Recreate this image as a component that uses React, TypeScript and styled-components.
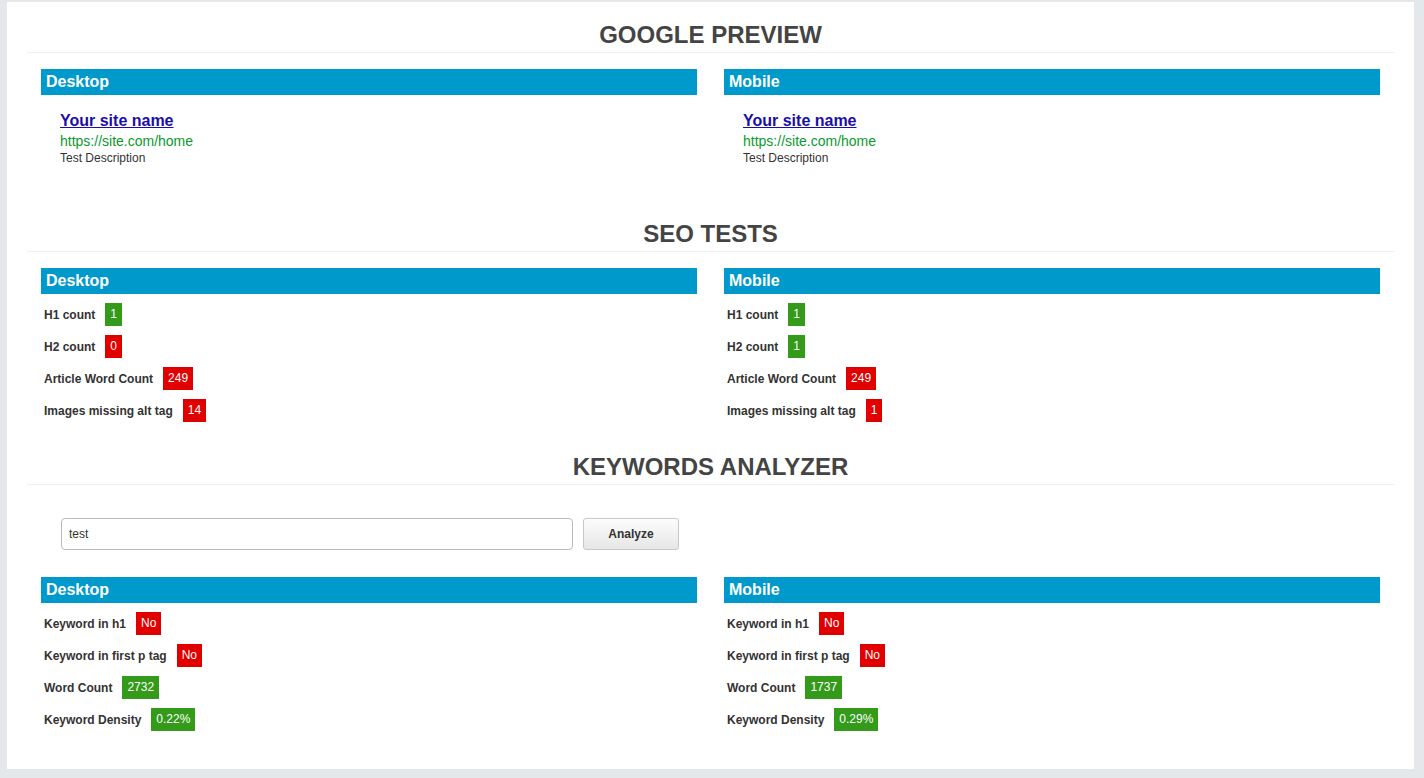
import React from "react";
import styled, { createGlobalStyle } from "styled-components";

const Global = createGlobalStyle`
  html, body { background: #e4e8eb; }
  body {
    margin: 2px 10px 9px 7px;
    font-family: "Liberation Sans", Arial, sans-serif;
    color: #333;
  }
`;

const Panel = styled.div`
  background: #fff;
  padding: 20px 20px 38px;
  box-sizing: border-box;
  height: 767px;
`;

const Section = styled.section<{ $gap: number }>`
  margin-bottom: ${(p) => p.$gap}px;
`;

const Title = styled.h2`
  margin: 0;
  font-size: 24px;
  line-height: 26px;
  font-weight: bold;
  text-align: center;
  color: #444;
  padding-bottom: 4px;
  border-bottom: 1px solid #eee;
`;

const Columns = styled.div<{ $top?: number }>`
  display: grid;
  grid-template-columns: 656px 656px;
  column-gap: 27px;
  padding: 0 14px;
  margin-top: ${(p) => p.$top ?? 16}px;
`;

const ColHeader = styled.div`
  background: #0099cc;
  color: #fff;
  font-size: 16px;
  font-weight: bold;
  height: 26px;
  line-height: 26px;
  padding-left: 5px;
`;

const Preview = styled.div`
  padding: 16px 0 0 19px;
`;

const SiteLink = styled.a`
  display: block;
  font-size: 16px;
  font-weight: bold;
  line-height: 20px;
  color: #1a0dab;
  text-decoration: underline;
  width: max-content;
`;

const Url = styled.div`
  font-size: 14px;
  line-height: 20px;
  color: #0a9a2e;
`;

const Desc = styled.div`
  font-size: 12px;
  line-height: 14px;
  color: #333;
`;

const Rows = styled.div`
  display: flex;
  flex-direction: column;
  gap: 9px;
  padding: 9px 0 0 3px;
`;

const Row = styled.div`
  display: flex;
  align-items: center;
  gap: 10px;
  height: 23px;
`;

const Label = styled.span`
  font-size: 12px;
  font-weight: bold;
  color: #333;
`;

const Badge = styled.span<{ $ok: boolean }>`
  display: inline-block;
  height: 23px;
  line-height: 23px;
  padding: 0 5px;
  font-size: 12px;
  color: #fff;
  background: ${(p) => (p.$ok ? "#339a1a" : "#e10000")};
`;

const SearchBar = styled.div`
  display: flex;
  gap: 10px;
  padding: 33px 0 0 34px;
`;

const Input = styled.input`
  width: 512px;
  height: 32px;
  box-sizing: border-box;
  border: 1px solid #bbb;
  border-radius: 4px;
  padding: 0 7px;
  font-family: "Liberation Sans", Arial, sans-serif;
  font-size: 12px;
  color: #333;
  outline: none;
`;

const Button = styled.button`
  width: 96px;
  height: 32px;
  border: 1px solid #c8c8c8;
  border-radius: 3px;
  background: linear-gradient(#fdfdfd, #e6e6e6);
  font-family: "Liberation Sans", Arial, sans-serif;
  font-size: 12px;
  font-weight: bold;
  color: #333;
`;

type Item = { label: string; value: string; ok: boolean };

const Results = ({ items }: { items: Item[] }) => (
  <Rows>
    {items.map((it) => (
      <Row key={it.label}>
        <Label>{it.label}</Label>
        <Badge $ok={it.ok}>{it.value}</Badge>
      </Row>
    ))}
  </Rows>
);

const PreviewBlock = () => (
  <Preview>
    <SiteLink href="#">Your site name</SiteLink>
    <Url>https://site.com/home</Url>
    <Desc>Test Description</Desc>
  </Preview>
);

const seoDesktop: Item[] = [
  { label: "H1 count", value: "1", ok: true },
  { label: "H2 count", value: "0", ok: false },
  { label: "Article Word Count", value: "249", ok: false },
  { label: "Images missing alt tag", value: "14", ok: false },
];
const seoMobile: Item[] = [
  { label: "H1 count", value: "1", ok: true },
  { label: "H2 count", value: "1", ok: true },
  { label: "Article Word Count", value: "249", ok: false },
  { label: "Images missing alt tag", value: "1", ok: false },
];
const kwDesktop: Item[] = [
  { label: "Keyword in h1", value: "No", ok: false },
  { label: "Keyword in first p tag", value: "No", ok: false },
  { label: "Word Count", value: "2732", ok: true },
  { label: "Keyword Density", value: "0.22%", ok: true },
];
const kwMobile: Item[] = [
  { label: "Keyword in h1", value: "No", ok: false },
  { label: "Keyword in first p tag", value: "No", ok: false },
  { label: "Word Count", value: "1737", ok: true },
  { label: "Keyword Density", value: "0.29%", ok: true },
];

export default function App() {
  return (
    <>
      <Global />
      <Panel>
        <Section $gap={56}>
          <Title>GOOGLE PREVIEW</Title>
          <Columns>
            <div>
              <ColHeader>Desktop</ColHeader>
              <PreviewBlock />
            </div>
            <div>
              <ColHeader>Mobile</ColHeader>
              <PreviewBlock />
            </div>
          </Columns>
        </Section>
        <Section $gap={32}>
          <Title>SEO TESTS</Title>
          <Columns>
            <div>
              <ColHeader>Desktop</ColHeader>
              <Results items={seoDesktop} />
            </div>
            <div>
              <ColHeader>Mobile</ColHeader>
              <Results items={seoMobile} />
            </div>
          </Columns>
        </Section>
        <Section $gap={0}>
          <Title>KEYWORDS ANALYZER</Title>
          <SearchBar>
            <Input defaultValue="test" />
            <Button>Analyze</Button>
          </SearchBar>
          <Columns $top={27}>
            <div>
              <ColHeader>Desktop</ColHeader>
              <Results items={kwDesktop} />
            </div>
            <div>
              <ColHeader>Mobile</ColHeader>
              <Results items={kwMobile} />
            </div>
          </Columns>
        </Section>
      </Panel>
    </>
  );
}
